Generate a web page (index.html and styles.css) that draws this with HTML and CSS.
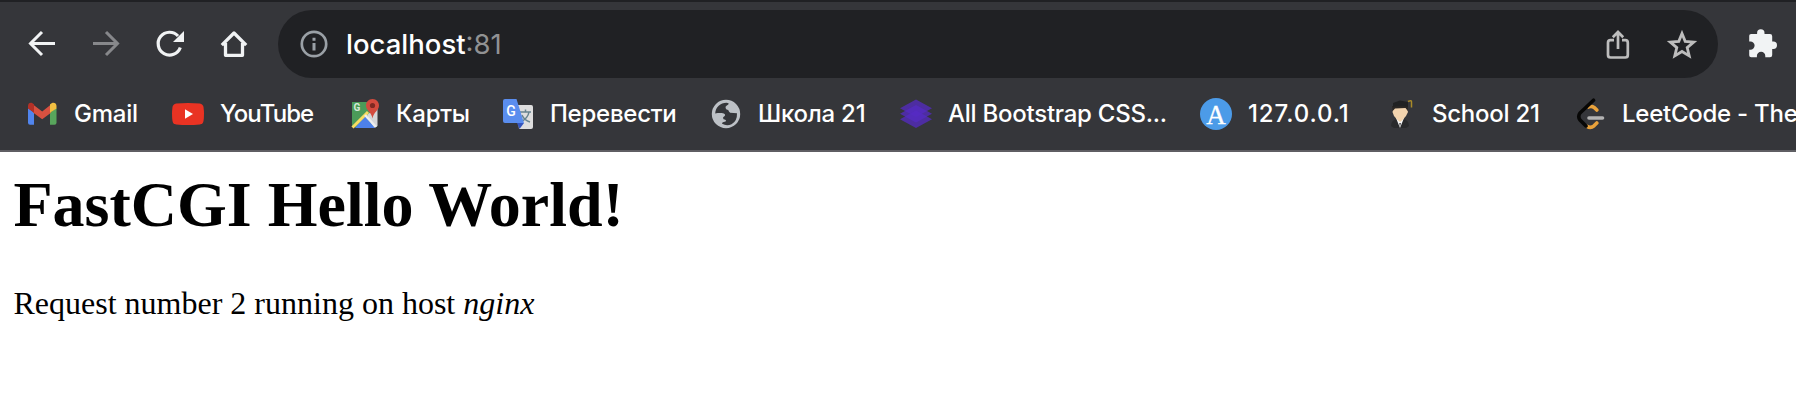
FILE: index.html
```html
<!DOCTYPE html>
<html lang="ru">
<head>
<meta charset="utf-8">
<title>localhost:81</title>
<link rel="stylesheet" href="styles.css">
</head>
<body>
<header class="chrome">
  <div class="toolbar">
    <nav class="nav">
      <svg class="nav-icon" viewBox="0 0 32 32"><path d="M29 15.500H5M16 4 4.500 15.500 16 27" fill="none" stroke="#f1f3f4" stroke-width="3"/></svg>
      <svg class="nav-icon" viewBox="0 0 32 32"><path d="M3 15.500h24M16 4l11.500 11.500L16 27" fill="none" stroke="#87888b" stroke-width="3"/></svg>
      <svg class="nav-icon" viewBox="0 0 32 32"><path d="M26.300 19.500A11.400 11.400 0 1 1 24 8" fill="none" stroke="#f1f3f4" stroke-width="3.200"/><path d="M30 3v11H19z" fill="#f1f3f4"/></svg>
      <svg class="nav-icon" viewBox="0 0 32 32"><path d="M7.500 15v12.300h17V15M3.800 17.200 16 5l12.200 12.200" fill="none" stroke="#f1f3f4" stroke-width="3.300" stroke-linejoin="round"/></svg>
    </nav>
    <div class="omnibox">
      <svg class="info-icon" viewBox="0 0 28 28"><circle cx="14" cy="14" r="12.200" fill="none" stroke="#9aa0a6" stroke-width="2.700"/><path d="M12.500 13h3v7.500h-3zM12.500 7.800h3v3h-3z" fill="#9aa0a6"/></svg>
      <span class="url">localhost<span class="port">:81</span></span>
      <svg class="action-icon" viewBox="0 0 32 32"><path d="M12 12.200H8.500a2.500 2.500 0 0 0-2.500 2.500V27a2.500 2.500 0 0 0 2.500 2.500h14.800a2.500 2.500 0 0 0 2.500-2.500V14.700a2.500 2.500 0 0 0-2.500-2.500H20M16 21V4.500M10.800 9.200 16 4l5.200 5.200" fill="none" stroke="#bdbdbd" stroke-width="2.700"/></svg>
      <svg class="action-icon" viewBox="0 0 32 32"><path d="m16 5.500 3.200 7.900 8.500.7-6.500 5.500 2 8.300-7.200-4.400-7.200 4.400 2-8.300-6.500-5.500 8.500-.7z" fill="none" stroke="#bdbdbd" stroke-width="2.800"/></svg>
    </div>
    <svg class="extensions" viewBox="0 0 32 32"><path fill="#f1f3f4" d="M3.200 7.800q0-1.800 1.900-1.800h6V5a3.700 3.700 0 0 1 7.400 0v1H24q2.200 0 2.200 2.200v5.300h1.100a3.700 3.700 0 0 1 0 7.400h-1.100v6q0 2.400-2.200 2.400h-4.700v-1.400a4.200 4.200 0 0 0-8.400 0v1.400H5.200q-2 0-2-2.100v-5.400h1.200a4.200 4.200 0 0 0 0-8.400H3.200z"/></svg>
  </div>
  <nav class="bookmarks">
    <a class="bookmark gmail"><svg class="favicon" viewBox="0 0 32 32"><path fill="#5185ee" d="M2 10 8 14.500v12.200H4a2 2 0 0 1-2-2z"/><path fill="#58a55c" d="m24 14.500 6.500-4.500v14.700a2 2 0 0 1-2 2H24z"/><path fill="#d85140" d="m7 6.500 9.200 7 8.800-7v8.300l-8.800 6.400L7 14.500z"/><path fill="#b33127" d="M2 10.500V8C2 4.500 5.500 3.500 8 6.500v8.300z"/><path fill="#f1bf42" d="M24 6.500c2.500-3 6.500-2 6.500 1.500v2.500L24 14.800z"/></svg><span class="label">Gmail</span></a>
    <a class="bookmark youtube"><svg class="favicon" viewBox="0 0 32 32"><path fill="#e93323" d="M4.200 5.500Q16 4.300 27.800 5.500 31 6 31.500 9q1 7 0 14-.5 3-3.700 3.500-11.800 1.200-23.600 0Q1 26 .5 23q-1-7 0-14Q1 6 4.200 5.500"/><path fill="#fff" d="M13 11.200v9.600l8-4.800z"/></svg><span class="label">YouTube</span></a>
    <a class="bookmark maps"><svg class="favicon" viewBox="0 0 32 32"><path fill="#4b9b59" d="M4 4h25v25H4z"/><path fill="#d5d6d8" d="M19 17 29.500 9v19l-4 2z"/><path fill="#4d80e8" d="m7 30 10-12 10 12z"/><path d="M4.500 29.500 20 14" stroke="#f7dc63" stroke-width="3"/><path d="m17 17 11 12" stroke="#eee" stroke-width="2.500"/><text x="5.500" y="13" class="maps-letter">G</text><path fill="#d34b3e" d="M24.500 1C20.500 1 18 4 18 7.500c0 5 5.500 6.500 6.500 13 1-6.500 6.500-8 6.500-13C31 4 28.500 1 24.500 1"/><circle cx="24.500" cy="7.500" r="2.600" fill="#7e2922"/></svg><span class="label">Карты</span></a>
    <a class="bookmark translate"><svg class="favicon" viewBox="0 0 32 32"><path fill="#dedede" d="M14 7h15.200Q31 7 31 9v20q0 2-2 2H17z"/><path d="M18 14h11M23.500 11.500V14M27 14q-1 6-8 10M20 17q2 5 8 7" fill="none" stroke="#65838f" stroke-width="1.500"/><path fill="#3555bd" d="M15 25h7l-4.500 6z"/><path fill="#5a8dee" d="M3 1h11.500L22 25H3q-2 0-2-2V3q0-2 2-2"/><text x="4.200" y="17.500" class="translate-letter">G</text></svg><span class="label">Перевести</span></a>
    <a class="bookmark globe"><svg class="favicon" viewBox="0 0 32 32"><circle cx="16" cy="16" r="14.200" fill="#bdc1c6"/><path fill="#35363a" d="M5.200 15.500C5.500 9 10.500 4.800 16.500 4.800q3 0 1.800 1.800l-1.800 1.200q-1.500.8-.8 2.500.4 1.500 2.500 1.700.8 2.200 2 2.800l6.800.5q.3 8-5.500 11-5 2-9.300-.5c-1-2 4-1.500 3.800-3s-2-.3-2.800-2.200c-.7-2 2.300-1.800 1.800-4-.8-2-5.500-1.300-7.300-1.600Z"/></svg><span class="label">Школа 21</span></a>
    <a class="bookmark bootstrap"><svg class="favicon" viewBox="0 0 32 32"><g fill="#562bc4" fill-opacity=".75"><path d="m16 1.500 16 8.700-16 8.700L0 10.200z"/><path d="m16 7 16 8.700-16 8.700L0 15.700z"/><path d="m16 12.500 16 8.700-16 8.800L0 21.200z"/></g></svg><span class="label">All Bootstrap CSS...</span></a>
    <a class="bookmark local"><svg class="favicon" viewBox="0 0 32 32"><circle cx="16" cy="16" r="16" fill="#4c9be8"/><text x="16" y="26" text-anchor="middle" class="local-letter">A</text></svg><span class="label">127.0.0.1</span></a>
    <a class="bookmark school"><svg class="favicon" viewBox="0 0 32 32"><path fill="#292a2c" d="M7 28q0-6 6-7h6q6 1 6 7l-3 2H10z"/><path fill="#f6f6f6" d="m12 20 4 10 4-10z"/><path fill="#222" d="m15.300 25 .7 4 .8-4z"/><path fill="#f3d4ae" d="M10 9h12.500l1.500 5-2 4-3.500 4-2.500 2-2.500-2-3.500-4-1.500-4z"/><path fill="#2b2724" d="M8 8h16l-.2 5-2.300-3-10.500.5L8.700 13z"/><path fill="#202122" d="m9 5 7-2.500L24 4v5q-7-2-15 0z"/><path d="M24 3.500q4-2 3.500 1v5" fill="none" stroke="#a98a28" stroke-width="1.500"/></svg><span class="label">School 21</span></a>
    <a class="bookmark leetcode"><svg class="favicon" viewBox="0 0 32 32"><g fill="none" stroke-width="3.600" stroke-linecap="round" stroke-linejoin="round"><path stroke="#e9a23b" d="M14.500 9q3-1.500 6 .7l2.300 2.300M22.800 25l-2.800 2.800q-3.500 3-7 .5"/><path stroke="#070706" d="M19.500 2.200 6 15Q3.500 18.500 6 22l6 6"/><path stroke="#b3b3b3" d="M15 20h13.500"/></g></svg><span class="label">LeetCode - The</span></a>
  </nav>
</header>
<main class="page">
  <h1 class="title">FastCGI Hello World!</h1>
  <p class="message">Request number 2 running on host <i>nginx</i></p>
</main>
</body>
</html>
```
FILE: styles.css
```css
body { margin: 0; background: #fff; overflow: hidden; }
.chrome {
  box-sizing: border-box;
  height: 152px;
  border-top: 2px solid #202124;
  border-bottom: 2px solid #5f5e63;
  background: #35363a;
  font-family: Inter, "Noto Sans", sans-serif;
}
.toolbar { display: flex; align-items: center; height: 84px; padding-left: 26px; }
.nav { display: flex; gap: 32px; width: 252px; }
.nav-icon, .favicon, .action-icon, .extensions { width: 32px; height: 32px; flex: none; }
.omnibox {
  box-sizing: border-box;
  display: flex;
  align-items: center;
  width: 1440px;
  height: 68px;
  padding: 0 20px 0 22px;
  border-radius: 34px;
  background: #202124;
}
.info-icon { width: 28px; height: 28px; margin-right: 18px; }
.url { flex: 1; color: #fff; font-size: 27.500px; font-weight: 500; line-height: 36px; }
.port { color: #919293; font-weight: 400; }
.action-icon + .action-icon { margin-left: 32px; }
.extensions { margin-left: 28px; }
.bookmarks { display: flex; align-items: center; height: 56px; padding-left: 26px; }
.bookmark { display: flex; align-items: center; gap: 16px; flex: none; }
.label { color: #fff; font-size: 24px; font-weight: 500; line-height: 32px; letter-spacing: -.25px; white-space: nowrap; }
.gmail { width: 146px; }
.youtube { width: 176px; }
.youtube .label { letter-spacing: -.9px; }
.maps { width: 154px; }
.translate { width: 208px; }
.globe { width: 190px; }
.bootstrap { width: 300px; }
.local { width: 184px; }
.local .label { letter-spacing: .9px; }
.school { width: 190px; }
.maps-letter { font: 700 10px Roboto, sans-serif; fill: #d5e8d8; }
.translate-letter { font: 500 14px Roboto, sans-serif; fill: #fff; }
.local-letter { font: 27px "Liberation Serif", serif; fill: #fff; stroke: #fff; stroke-width: .3px; }
.page { padding: 16px 13.500px; color: #000; font-family: "Liberation Serif", "Times New Roman", serif; }
.title { margin: 0; font-size: 64px; line-height: 74px; }
.message { margin: 43px 0 0; font-size: 32px; line-height: 36px; }
```
